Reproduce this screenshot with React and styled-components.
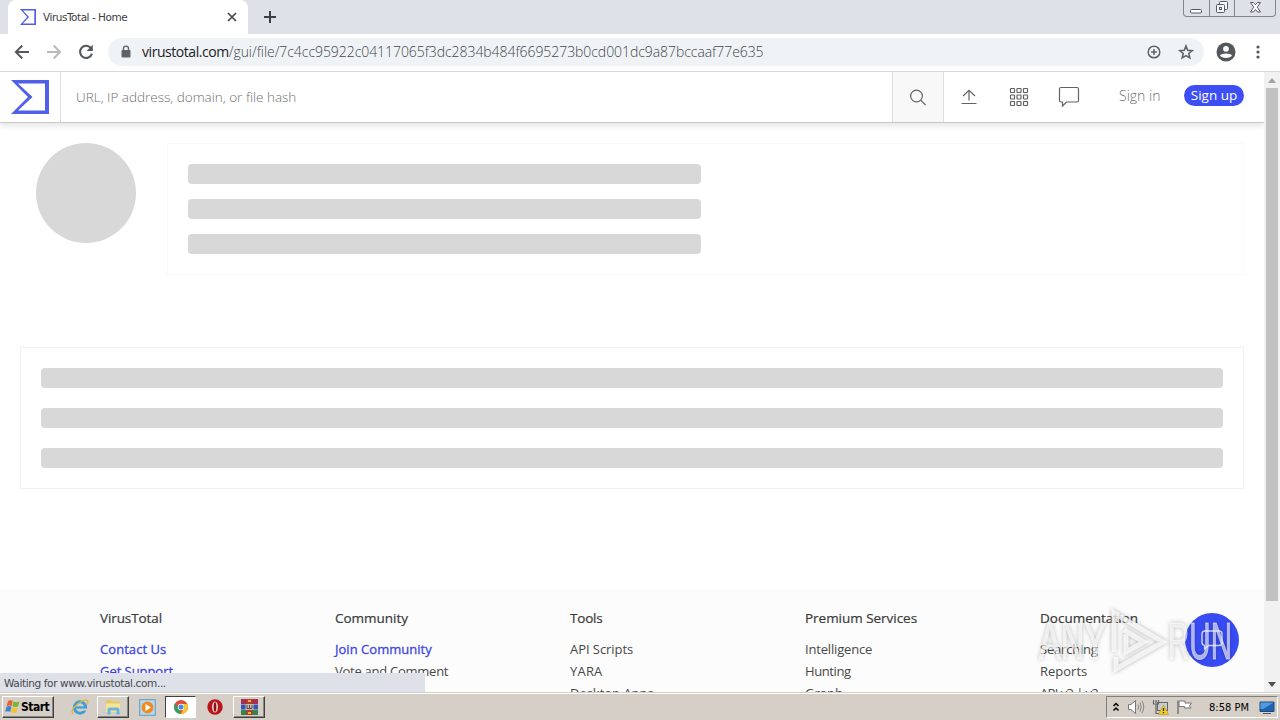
import React from 'react';
import styled, { createGlobalStyle, css } from 'styled-components';

const GlobalStyle = createGlobalStyle`
  * {
    box-sizing: border-box;
  }
  body {
    margin: 0;
    overflow: hidden;
    background: #fff;
  }
  svg {
    display: block;
    flex: none;
  }
`;

const Desktop = styled.div`
  position: relative;
  display: flex;
  flex-direction: column;
  width: 1280px;
  height: 720px;
  overflow: hidden;
  font-family: 'Open Sans', 'Noto Sans', sans-serif;
`;

/* text stretched or tightened with the track prop */
const Label = styled.span`
  white-space: nowrap;
  letter-spacing: ${({ $track }) => $track || 0}px;
`;

/* browser frame */

const TabStrip = styled.div`
  display: flex;
  height: 34px;
  flex: none;
  background: #dee1e7;
  padding-left: 8px;
`;

const Tab = styled.div`
  display: flex;
  align-items: center;
  width: 240px;
  height: 34px;
  padding: 0 9px 0 12px;
  background: #fff;
  border-radius: 8px 8px 0 0;
  font-family: 'DejaVu Sans', sans-serif;
  font-size: 10.5px;
  color: #3c4043;
`;

const TabTitle = styled(Label)`
  flex: 1;
  margin-left: 7px;
`;

const NewTab = styled.div`
  display: flex;
  align-items: center;
  margin-left: 15px;
`;

const WindowButtons = styled.div`
  display: flex;
  width: 93px;
  height: 17px;
  margin: 0 4px 0 auto;
  border: 1px solid #82868d;
  border-top: 0;
  border-radius: 0 0 4px 4px;
`;

const WindowButton = styled.div`
  display: flex;
  justify-content: center;
  align-items: flex-end;
  width: ${({ $width }) => $width}px;
  padding-bottom: 2px;

  & + & {
    border-left: 1px solid #82868d;
  }
`;

const Toolbar = styled.div`
  display: flex;
  align-items: center;
  height: 38px;
  flex: none;
  padding: 0 10px 1px 13px;
  border-bottom: 1px solid #d6d8db;
  background: #fff;
`;

const NavIcons = styled.div`
  display: flex;
  gap: 14px;
`;

const AddressBar = styled.div`
  display: flex;
  align-items: center;
  width: 1096px;
  height: 28px;
  margin-left: 13px;
  padding: 0 9px 0 11px;
  border-radius: 14px;
  background: #f0f3f6;
  color: #43474b;
`;

const Url = styled(Label)`
  flex: 1;
  margin-left: 9px;
  font-size: 14px;
  font-weight: 300;
  line-height: 20px;

  b {
    font-weight: 400;
    letter-spacing: -0.45px;
    color: #202124;
  }
`;

const BarIcons = styled.div`
  display: flex;
  gap: 14px;
`;

const ToolbarEnd = styled.div`
  display: flex;
  align-items: center;
  gap: 12px;
  margin-left: 12px;
`;

/* page */

const Viewport = styled.div`
  display: flex;
  height: 620px;
  flex: none;
`;

const Page = styled.div`
  position: relative;
  display: flex;
  flex-direction: column;
  width: 1264px;
  height: 620px;
  overflow: hidden;
  background: #fff;
`;

const Header = styled.header`
  display: flex;
  flex: none;
  height: 51px;
  border-bottom: 1px solid #c9c9cb;
  box-shadow: 0 3px 6px rgba(0, 0, 0, 0.1);
`;

const LogoCell = styled.div`
  width: 61px;
  padding: 8px 0 0 11px;
  border-right: 1px solid #dedede;
`;

const SearchText = styled(Label)`
  width: 831px;
  padding-left: 15px;
  line-height: 50px;
  font-size: 13.5px;
  font-weight: 300;
  color: #6f6f6f;
`;

const SearchButton = styled.div`
  display: flex;
  align-items: center;
  justify-content: center;
  width: 52px;
  border: solid #dedede;
  border-width: 0 1px;
  background: #f8f8f9;
`;

const HeaderIcon = styled.div`
  display: flex;
  align-items: center;
  justify-content: center;
  width: 50px;
`;

const SignIn = styled(Label)`
  margin-left: 25px;
  line-height: 47px;
  font-size: 14px;
  font-weight: 300;
  color: #6f6f6f;
`;

const SignUp = styled(Label)`
  width: 60px;
  height: 21px;
  margin: 13px 20px 0 auto;
  border-radius: 11px;
  background: #3d4ef5;
  color: #fff;
  font-size: 13.5px;
  line-height: 21px;
  text-align: center;
`;

const Summary = styled.section`
  display: flex;
  gap: 31px;
  padding: 20px 20px 0 36px;
`;

const Score = styled.div`
  width: 100px;
  height: 100px;
  border-radius: 50%;
  background: #d8d8d8;
`;

const Card = styled.div`
  display: flex;
  flex-direction: column;
  flex: 1;
  gap: ${({ $gap }) => $gap}px;
  padding: 20px;
  border: 1px solid ${({ $line }) => $line};
`;

const Details = styled.section`
  display: flex;
  padding: 72px 20px 0;
`;

const Bar = styled.div`
  width: ${({ $width }) => $width};
  height: 20px;
  border-radius: 4px;
  background: #d8d8d8;
`;

const Footer = styled.footer`
  display: grid;
  grid-template-columns: repeat(5, 235px);
  flex: none;
  height: 200px;
  margin-top: 100px;
  padding: 18px 0 0 100px;
  background: #fcfcfc;
`;

const FooterColumn = styled.div`
  display: flex;
  flex-direction: column;
  align-items: flex-start;
`;

const FooterTitle = styled(Label)`
  height: 31px;
  line-height: 22px;
  font-size: 13.5px;
  color: #3a3a3a;
  -webkit-text-stroke: 0.2px #3a3a3a;
`;

const FooterLink = styled(Label)`
  height: 22px;
  line-height: 22px;
  font-size: 13px;
  color: #484848;
  ${({ $strong }) =>
    $strong &&
    css`
      color: #3d46e0;
      -webkit-text-stroke: 0.3px #3d46e0;
    `}
`;

const ChatButton = styled.div`
  position: absolute;
  right: 25px;
  bottom: 25px;
  display: flex;
  align-items: center;
  justify-content: center;
  width: 54px;
  height: 54px;
  border-radius: 50%;
  background: #394cf4;
`;

const StatusBubble = styled(Label)`
  position: absolute;
  left: 0;
  bottom: 0;
  width: 425px;
  height: 19px;
  padding-left: 4px;
  background: #dee1e7;
  font-family: 'DejaVu Sans', sans-serif;
  font-size: 10.5px;
  line-height: 20px;
  color: #45484c;
`;

const Watermark = styled.svg`
  position: absolute;
  left: 1034px;
  top: 604px;
  filter: drop-shadow(0 0 2px rgba(0, 0, 0, 0.38));
`;

const Scrollbar = styled.div`
  display: flex;
  flex-direction: column;
  align-items: center;
  width: 16px;
  background: #f1f1f1;
`;

const Arrow = styled.div`
  display: flex;
  align-items: center;
  justify-content: center;
  height: 16px;
`;

const Thumb = styled.div`
  width: 12px;
  height: 513px;
  margin-bottom: auto;
  background: #c1c1c1;
`;

/* taskbar */

const Taskbar = styled.div`
  display: flex;
  align-items: flex-start;
  height: 28px;
  flex: none;
  padding: 3px 2px 0;
  border-top: 1px solid #d4d0c8;
  background: #d5cfc7;
  box-shadow: inset 0 1px #fff;
  font-family: 'DejaVu Sans Condensed', 'DejaVu Sans', sans-serif;
`;

const raised = css`
  border: 1px solid;
  border-color: #fff #404040 #404040 #fff;
  box-shadow: inset -1px -1px #8a8680;
`;

const StartButton = styled.div`
  display: flex;
  align-items: center;
  width: 52px;
  height: 22px;
  margin-right: 9px;
  padding-left: 1px;
  font-size: 12px;
  font-weight: 700;
  color: #000;
  ${raised}
`;

const TaskItem = styled.div`
  display: flex;
  align-items: center;
  justify-content: center;
  width: ${({ $width }) => $width}px;
  height: 22px;
  ${({ $open }) => $open && raised}
  ${({ $active }) =>
    $active &&
    css`
      border: 1px solid;
      border-color: #404040 #fff #fff #404040;
      background: #fff;
    `}
`;

const Tray = styled.div`
  display: flex;
  align-items: center;
  justify-content: space-between;
  width: 172px;
  height: 22px;
  margin-left: auto;
  padding: 0 2px 0 5px;
  border: 1px solid;
  border-color: #808080 #fff #fff #808080;
`;

const TrayIcons = styled.div`
  display: flex;
  align-items: center;
  gap: 7px;
`;

const Clock = styled(Label)`
  margin-left: 6px;
  font-size: 11px;
  color: #000;
`;

const line = { fill: 'none', stroke: '#636363', strokeWidth: 1.2 };

const VtLogo = ({ size, height }) => (
  <svg width={size} height={height} viewBox="0 0 38 35" preserveAspectRatio="none">
    <path
      fill="#4f5fea"
      fillRule="evenodd"
      d="M0 0H38V35H0L17 17.500ZM7 3.500L21.500 17.500L7 31.500H34V3.500Z"
    />
  </svg>
);

const Back = ({ color, flip }) => (
  <svg width="18" height="18" viewBox="0 0 18 18" transform={flip ? 'scale(-1 1)' : undefined}>
    <path d="M16 9H3M9.300 2.500L2.800 9L9.300 15.500" fill="none" stroke={color} strokeWidth="1.900" />
  </svg>
);

const Reload = () => (
  <svg width="18" height="18" viewBox="0 0 18 18">
    <path d="M14.200 5.400A6.100 6.100 0 1 0 15 10.600" fill="none" stroke="#54575b" strokeWidth="2" />
    <path d="M15.800 1.800V8H9.600Z" fill="#54575b" />
  </svg>
);

const Lock = () => (
  <svg width="14" height="16" viewBox="0 0 14 16">
    <rect x="2.500" y="6" width="9" height="7.500" rx="1" fill="#5f6368" />
    <path d="M4.500 6.500V4.600A2.500 2.500 0 0 1 9.500 4.600V6.500" fill="none" stroke="#5f6368" strokeWidth="1.400" />
  </svg>
);

const ZoomIcon = () => (
  <svg width="18" height="18" viewBox="0 0 18 18" fill="none" stroke="#5f6368" strokeWidth="1.500">
    <circle cx="9" cy="9" r="5.800" />
    <path d="M9 6V12M6 9H12" />
  </svg>
);

const Star = () => (
  <svg width="18" height="18" viewBox="0 0 18 18">
    <path
      d="M9 3L10.700 7.200L15.200 7.600L11.800 10.500L12.800 14.900L9 12.600L5.200 14.900L6.200 10.500L2.800 7.600L7.300 7.200Z"
      fill="none"
      stroke="#5f6368"
      strokeWidth="1.600"
    />
  </svg>
);

const Profile = () => (
  <svg width="20" height="20" viewBox="0 0 20 20">
    <circle cx="10" cy="10" r="9.500" fill="#54575c" />
    <circle cx="10" cy="6.800" r="2.900" fill="#fff" />
    <path d="M4 13.500C5 10.800 15 10.800 16 13.500C14.500 16.800 5.500 16.800 4 13.500Z" fill="#fff" />
  </svg>
);

const Dots = () => (
  <svg width="20" height="20" viewBox="0 0 20 20" fill="#54575c">
    <circle cx="10" cy="5" r="1.600" />
    <circle cx="10" cy="10" r="1.600" />
    <circle cx="10" cy="15" r="1.600" />
  </svg>
);

const Search = () => (
  <svg width="18" height="18" viewBox="0 0 18 18" {...line}>
    <circle cx="7.500" cy="8" r="5.900" />
    <path d="M11.700 12.200L16.500 17" />
  </svg>
);

const Upload = () => (
  <svg width="18" height="18" viewBox="0 0 18 18" {...line}>
    <path d="M9 12.500V2.500M3 8L9 2.300L15 8M1.500 15.500H16.500" />
  </svg>
);

const Apps = () => (
  <svg width="20" height="20" viewBox="0 0 20 20" {...line}>
    {[1.5, 8, 14.5].map((y) =>
      [1.5, 8, 14.5].map((x) => <rect key={`${x}-${y}`} x={x} y={y} width="4" height="4" rx="0.500" />)
    )}
  </svg>
);

const Bubble = () => (
  <svg width="22" height="22" viewBox="0 0 22 22" {...line}>
    <path d="M3 1.500H19Q20.500 1.500 20.500 3V14.500Q20.500 16 19 16H8.500L4.500 20V16H3Q1.500 16 1.500 14.500V3Q1.500 1.500 3 1.500Z" />
  </svg>
);

const ChatBubble = () => (
  <svg width="24" height="24" viewBox="0 0 24 24" fill="none" stroke="#dfe3ff" strokeWidth="1.300">
    <path d="M5 3H19Q22 3 22 6V14.500Q22 17.500 19 17.500H8.500L4.500 21V17.300Q2 17 2 14.500V6Q2 3 5 3Z" />
  </svg>
);

const WindowsFlag = () => (
  <svg width="17" height="16" viewBox="0 0 16 16">
    <path d="M3.500 2Q6 .5 8.300 2L7.200 7Q4.800 5.800 2.200 7Z" fill="#e8632c" />
    <path d="M9 2.400Q11.500 4 15 2.500L13.500 7.600Q10.500 8.600 8 7.300Z" fill="#77b532" />
    <path d="M2 7.700Q4.500 6.500 7 7.800L5.800 12.800Q3.500 11.500.7 12.800Z" fill="#3f83cf" />
    <path d="M7.800 8.200Q10.500 9.500 13.200 8.400L12 13.400Q9 14.600 6.600 13.200Z" fill="#f3c22d" />
  </svg>
);

const Explorer = () => (
  <svg width="18" height="18" viewBox="0 0 18 18">
    <circle cx="9" cy="9.500" r="5.700" fill="none" stroke="#3e9edb" strokeWidth="3" />
    <path d="M5 9.500H15" stroke="#3e9edb" strokeWidth="2.200" />
    <path d="M11.500 11.600H17" stroke="#d5cfc7" strokeWidth="2" />
    <path d="M2 16Q-1 12 6.500 6.200Q14 .5 16.400 2.700Q17.500 4 16 6.500" fill="none" stroke="#e3b53c" strokeWidth="1.300" />
  </svg>
);

const Folder = () => (
  <svg width="18" height="18" viewBox="0 0 18 18">
    <path d="M2 2H7L8.500 3.500H16V14H2Z" fill="#e5c967" />
    <path d="M2 5.500H16V14H2Z" fill="#f5e496" />
    <path d="M3.500 16.500V12Q3.500 9.500 6 9.500H13Q15.500 9.500 15.500 12V16.500H12.500V12.500H6.500V16.500Z" fill="#68b5df" />
  </svg>
);

const Player = () => (
  <svg width="17" height="17" viewBox="0 0 17 17">
    <rect x=".7" y=".7" width="15.600" height="15.600" fill="#b8d9ed" stroke="#5b9bc8" />
    <circle cx="8.500" cy="8.500" r="6" fill="#f28b1d" />
    <path d="M6.500 5L12 8.500L6.500 12Z" fill="#fff" />
  </svg>
);

const Chrome = () => (
  <svg width="14" height="14" viewBox="0 0 14 14">
    <circle cx="7" cy="7" r="7" fill="#de4c3c" />
    <path d="M.9 3.600L5 9L7 14A7 7 0 0 1 .9 3.600Z" fill="#2da45d" />
    <path d="M7 4H13.300A7 7 0 0 1 7 14L9.500 8.500Z" fill="#f7c42d" />
    <circle cx="7" cy="7" r="3.200" fill="#fff" />
    <circle cx="7" cy="7" r="2.500" fill="#4a86e0" />
  </svg>
);

const Opera = () => (
  <svg width="16" height="16" viewBox="0 0 16 16">
    <circle cx="8" cy="8" r="7.700" fill="#b8151c" />
    <ellipse cx="8" cy="8" rx="3" ry="5.600" fill="#e0d3d0" />
    <ellipse cx="8" cy="8" rx="1.300" ry="4.800" fill="#9b0d14" />
  </svg>
);

const WinRar = () => (
  <svg width="17" height="16" viewBox="0 0 17 16">
    <path d="M0 0H17V5H0Z" fill="#a72d51" />
    <path d="M0 5.500H17V10.500H0Z" fill="#3555b5" />
    <path d="M0 11H17V16H0Z" fill="#33854b" />
    <path d="M5.500 0H11.500V16H5.500Z" fill="#b33b32" />
    <path d="M4.500 5H12.500V11H4.500Z" fill="#c3bbb4" />
    <path d="M6 6V9.500H8.500V6M8.500 9.500H11V6" fill="none" stroke="#534747" />
    <path d="M7 1H10V3H7ZM7 13H10V15H7Z" fill="#e2b738" />
  </svg>
);

const TrayChevron = () => (
  <svg width="8" height="12" viewBox="0 0 8 12" fill="none" stroke="#000" strokeWidth="1.500">
    <path d="M1.500 5L4 2.500L6.500 5M1.500 9.500L4 7L6.500 9.500" />
  </svg>
);

const Speaker = () => (
  <svg width="18" height="16" viewBox="0 0 18 16">
    <path d="M1.500 5.500H4L8.500 1.500V14.500L4 10.500H1.500Z" fill="#fff" stroke="#777" />
    <path d="M11 5.500Q12.500 8 11 10.500M13 3.500Q15.500 8 13 12.500M15 2Q18.500 8 15 14" fill="none" stroke="#888" />
  </svg>
);

const Network = () => (
  <svg width="17" height="16" viewBox="0 0 17 16">
    <rect x="5.500" y="3.500" width="10" height="8" fill="#c9cdd2" stroke="#666" />
    <path d="M1.500 1V5H6.500V1M4 5V14.500H7M4 1V4" fill="none" stroke="#666" strokeWidth="1.200" />
    <path d="M11.500 6L16.500 15.500H6.500Z" fill="#f5ce26" stroke="#b4941a" strokeWidth=".6" />
    <path d="M11.500 9V12M11.500 13V14.300" stroke="#332a00" strokeWidth="1.300" />
  </svg>
);

const Flag = () => (
  <svg width="17" height="16" viewBox="0 0 17 16">
    <path d="M2 1.500V15" stroke="#777" strokeWidth="1.500" />
    <path d="M3 2H9V4H15.500L13.500 7L15 9H8.500V7.500H3Z" fill="#fff" stroke="#777" />
  </svg>
);

const Monitor = () => (
  <svg width="16" height="15" viewBox="0 0 16 15">
    <path d="M1 2H15V11.500H1Z" fill="#1f63b5" stroke="#24466e" />
    <path d="M1.500 2.500H14.500L4 9H1.500Z" fill="#4f9ae0" />
    <path d="M4 13.500H12" stroke="#4e5965" />
  </svg>
);

const columns = [
  {
    title: 'VirusTotal',
    track: -0.1,
    links: [
      ['Contact Us', 0.06, true],
      ['Get Support', -0.05, true],
    ],
  },
  {
    title: 'Community',
    track: -0.03,
    links: [
      ['Join Community', 0.03, true],
      ['Vote and Comment', -0.26],
    ],
  },
  { title: 'Tools', track: -0.2, links: [['API Scripts', -0.05], ['YARA', 0.2], ['Desktop Apps', -0.02]] },
  { title: 'Premium Services', track: -0.03, links: [['Intelligence', -0.17], ['Hunting', -0.4], ['Graph', 0]] },
  { title: 'Documentation', track: 0, links: [['Searching', -0.2], ['Reports', 0], ['API v3 | v2', -0.6]] },
];

const BrowserFrame = () => (
  <>
    <TabStrip>
      <Tab>
        <VtLogo size={16} height={16} />
        <TabTitle $track={-0.48}>VirusTotal - Home</TabTitle>
        <svg width="14" height="14" viewBox="0 0 14 14">
          <path d="M3 3L11 11M11 3L3 11" stroke="#45484c" strokeWidth="1.700" />
        </svg>
      </Tab>
      <NewTab>
        <svg width="14" height="14" viewBox="0 0 14 14">
          <path d="M7 1V13M1 7H13" stroke="#3c4043" strokeWidth="2" />
        </svg>
      </NewTab>
      <WindowButtons>
        <WindowButton $width={25}>
          <svg width="13" height="6" viewBox="0 0 13 6">
            <rect x=".5" y="1.500" width="11" height="3.500" rx="1" fill="#fff" stroke="#555a62" />
          </svg>
        </WindowButton>
        <WindowButton $width={25}>
          <svg width="14" height="14" viewBox="0 0 14 14" fill="#f6f7f8" stroke="#555a62">
            <rect x="4.500" y="1.500" width="8" height="8" rx="1" />
            <rect x="1.500" y="4.500" width="8" height="8" rx="1" />
            <rect x="4.500" y="7.500" width="2" height="2" />
          </svg>
        </WindowButton>
        <WindowButton $width={41}>
          <svg width="13" height="13" viewBox="0 0 13 13">
            <path
              d="M1.500 1.500H4.500L6.500 3.800L8.500 1.500H11.500L8.300 6.200L11.500 11H8.500L6.500 8.600L4.500 11H1.500L4.700 6.200Z"
              fill="#fff"
              stroke="#555a62"
            />
          </svg>
        </WindowButton>
      </WindowButtons>
    </TabStrip>
    <Toolbar>
      <NavIcons>
        <Back color="#54575b" />
        <Back color="#b9bbbe" flip />
        <Reload />
      </NavIcons>
      <AddressBar>
        <Lock />
        <Url $track={-0.06}>
          <b>virustotal.com</b>/gui/file/7c4cc95922c04117065f3dc2834b484f6695273b0cd001dc9a87bccaaf77e635
        </Url>
        <BarIcons>
          <ZoomIcon />
          <Star />
        </BarIcons>
      </AddressBar>
      <ToolbarEnd>
        <Profile />
        <Dots />
      </ToolbarEnd>
    </Toolbar>
  </>
);

const VirusTotalPage = () => (
  <Page>
    <Header>
      <LogoCell>
        <VtLogo size={38} height={34} />
      </LogoCell>
      <SearchText>URL, IP address, domain, or file hash</SearchText>
      <SearchButton>
        <Search />
      </SearchButton>
      <HeaderIcon>
        <Upload />
      </HeaderIcon>
      <HeaderIcon>
        <Apps />
      </HeaderIcon>
      <HeaderIcon>
        <Bubble />
      </HeaderIcon>
      <SignIn>Sign in</SignIn>
      <SignUp>Sign up</SignUp>
    </Header>
    <Summary>
      <Score />
      <Card $gap={15} $line="#f8f8f8">
        <Bar $width="513px" />
        <Bar $width="513px" />
        <Bar $width="513px" />
      </Card>
    </Summary>
    <Details>
      <Card $gap={20} $line="#f0f0f0">
        <Bar $width="100%" />
        <Bar $width="100%" />
        <Bar $width="100%" />
      </Card>
    </Details>
    <Footer>
      {columns.map((column) => (
        <FooterColumn key={column.title}>
          <FooterTitle $track={column.track}>{column.title}</FooterTitle>
          {column.links.map(([text, track, strong]) => (
            <FooterLink key={text} $track={track} $strong={strong}>
              {text}
            </FooterLink>
          ))}
        </FooterColumn>
      ))}
    </Footer>
    <ChatButton>
      <ChatBubble />
    </ChatButton>
    <StatusBubble $track={-0.37}>Waiting for www.virustotal.com...</StatusBubble>
  </Page>
);

const App = () => {
  return (
    <>
      <GlobalStyle />
      <Desktop>
        <BrowserFrame />
        <Viewport>
          <VirusTotalPage />
          <Scrollbar>
            <Arrow>
              <svg width="8" height="5" viewBox="0 0 8 5">
                <path d="M0 5L4 0L8 5Z" fill="#a3a3a3" />
              </svg>
            </Arrow>
            <Thumb />
            <Arrow>
              <svg width="8" height="5" viewBox="0 0 8 5">
                <path d="M0 0L4 5L8 0Z" fill="#505050" />
              </svg>
            </Arrow>
          </Scrollbar>
        </Viewport>
        <Taskbar>
          <StartButton>
            <WindowsFlag />
            <Label $track={-0.5}>Start</Label>
          </StartButton>
          <TaskItem $width={34}>
            <Explorer />
          </TaskItem>
          <TaskItem $width={32} $open>
            <Folder />
          </TaskItem>
          <TaskItem $width={36}>
            <Player />
          </TaskItem>
          <TaskItem $width={31} $active>
            <Chrome />
          </TaskItem>
          <TaskItem $width={37}>
            <Opera />
          </TaskItem>
          <TaskItem $width={32} $open>
            <WinRar />
          </TaskItem>
          <Tray>
            <TrayIcons>
              <TrayChevron />
              <Speaker />
              <Network />
              <Flag />
            </TrayIcons>
            <Clock>8:58 PM</Clock>
            <Monitor />
          </Tray>
        </Taskbar>
        <Watermark width="206" height="74" viewBox="0 0 206 74">
          <g
            fill="#fff"
            fillOpacity=".6"
            stroke="#fff"
            strokeOpacity=".5"
            fontFamily="'Liberation Sans', sans-serif"
            fontSize="51"
          >
            <text x="5" y="55" textLength="67" lengthAdjust="spacingAndGlyphs">
              ANY
            </text>
            <text x="134" y="55" textLength="64" lengthAdjust="spacingAndGlyphs">
              RUN
            </text>
          </g>
          <g fill="none" stroke="#fff" strokeOpacity=".75" strokeWidth="5">
            <path d="M80 48V9L129 38L82 65V53" />
            <path d="M92 30V48L110 38L90 26" />
          </g>
        </Watermark>
      </Desktop>
    </>
  );
};

export default App;
